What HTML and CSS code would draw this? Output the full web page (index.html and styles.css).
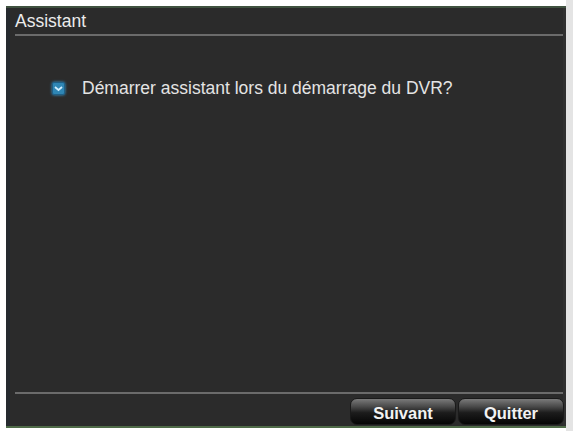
FILE: index.html
```html
<!DOCTYPE html>
<html>
<head>
<meta charset="utf-8">
<link rel="stylesheet" href="styles.css">
</head>
<body>
<div class="page">
  <div class="window">
    <div class="title">Assistant</div>
    <div class="sep"></div>
    <div class="content">
      <label class="option">
        <span class="check">
          <svg width="13" height="13" viewBox="0 0 13 13">
            <rect x="0.5" y="0.5" width="12" height="12" rx="1.5" fill="#2f86b4" stroke="#1f5f86"/>
            <path d="M3 5 L6.5 8 L10 5" fill="none" stroke="#cfeeff" stroke-width="1.8"/>
          </svg>
        </span>
        <span class="label">Démarrer assistant lors du démarrage du DVR?</span>
      </label>
    </div>
    <div class="sep"></div>
    <div class="footer">
      <button class="btn">Suivant</button>
      <button class="btn">Quitter</button>
    </div>
  </div>
</div>
</body>
</html>
```
FILE: styles.css
```css
html, body {
  margin: 0;
  padding: 0;
  background: #ffffff;
}
.page {
  width: 573px;
  height: 431px;
  padding: 6px 0 0 6px;
  box-sizing: border-box;
  background: linear-gradient(to right, #ffffff 0, #ffffff 566px, #e4e4e4 566px);
}
.window {
  width: 560px;
  height: 422px;
  box-sizing: border-box;
  background: #2b2b2b;
  border-top: 2px solid #405240;
  border-bottom: 2px solid #4f6b48;
  display: flex;
  flex-direction: column;
  font-family: "Liberation Sans", Arial, sans-serif;
  color: #e6e6e6;
  box-shadow: inset 4px 0 0 #262a2e, inset -3px 0 0 #303030;
}
.title {
  height: 26px;
  box-sizing: border-box;
  padding: 4px 0 0 9px;
  font-size: 17.5px;
  line-height: 19px;
  color: #ececec;
}
.sep {
  height: 2px;
  margin: 0 3px 0 9px;
  background: #6b6b6b;
}
.content {
  flex: 1;
  padding: 45px 0 0 46px;
}
.option {
  display: flex;
  align-items: center;
  gap: 17px;
}
.check {
  width: 13px;
  height: 13px;
  display: block;
  filter: drop-shadow(0 0 1.5px #3a9ad0);
}
.check svg {
  display: block;
}
.label {
  font-size: 17.5px;
  line-height: 14px;
  color: #e4e4e4;
}
.footer {
  height: 32px;
  box-sizing: border-box;
  padding: 4px 2px 0 0;
  display: flex;
  justify-content: flex-end;
  gap: 2px;
}
.btn {
  width: 106px;
  height: 27px;
  border: 1px solid #1a1a1a;
  border-radius: 7px;
  background: linear-gradient(to bottom, #7a7a7a 0%, #4a4a4a 30%, #1c1c1c 55%, #050505 100%);
  color: #f2f2f2;
  font-family: "Liberation Sans", Arial, sans-serif;
  font-size: 16.5px;
  font-weight: bold;
  padding: 3px 0 0 0;
}
```
